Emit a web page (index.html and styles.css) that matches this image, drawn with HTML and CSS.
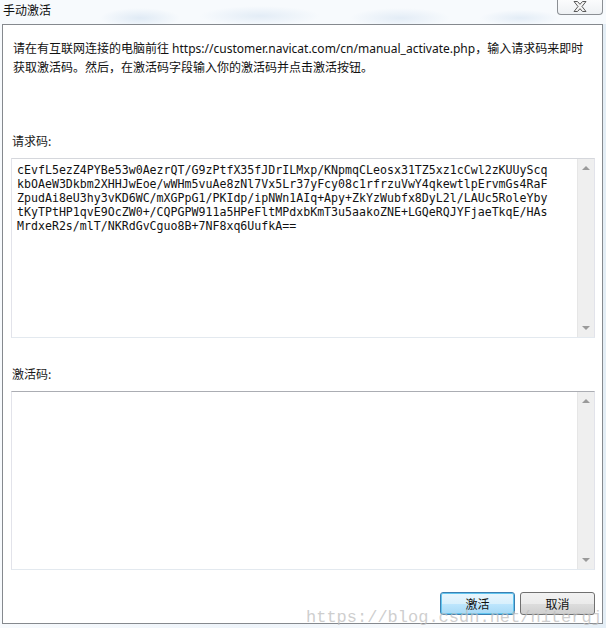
FILE: index.html
```html
<!DOCTYPE html>
<html lang="zh-CN">
<head>
<meta charset="utf-8">
<title>手动激活</title>
<link rel="stylesheet" href="styles.css">
</head>
<body>
<div class="window">
  <div class="titlebar">
    <span class="title">手动激活</span>
    <button class="close" aria-label="关闭">
      <svg width="14" height="11" viewBox="0 0 14 11">
        <polygon points="1,0.5 4.5,0.5 7,3.3 9.5,0.5 13,0.5 9,5.5 13,10.5 9.5,10.5 7,7.7 4.5,10.5 1,10.5 5,5.5" fill="#f4f4f4" stroke="#5a5a5a" stroke-width="1" stroke-linejoin="round"/>
      </svg>
    </button>
  </div>
  <div class="panel">
    <p class="intro">请在有互联网连接的电脑前往 https://customer.navicat.com/cn/manual_activate.php，输入请求码来即时<br>获取激活码。然后，在激活码字段输入你的激活码并点击激活按钮。</p>
    <div class="label">请求码:</div>
    <div class="textbox">
      <div class="tb-text">cEvfL5ezZ4PYBe53w0AezrQT/G9zPtfX35fJDrILMxp/KNpmqCLeosx31TZ5xz1cCwl2zKUUyScq
kbOAeW3Dkbm2XHHJwEoe/wWHm5vuAe8zNl7Vx5Lr37yFcy08c1rfrzuVwY4qkewtlpErvmGs4RaF
ZpudAi8eU3hy3vKD6WC/mXGPpG1/PKIdp/ipNWn1AIq+Apy+ZkYzWubfx8DyL2l/LAUc5RoleYby
tKyTPtHP1qvE9OcZW0+/CQPGPW911a5HPeFltMPdxbKmT3u5aakoZNE+LGQeRQJYFjaeTkqE/HAs
MrdxeR2s/mlT/NKRdGvCguo8B+7NF8xq6UufkA==</div>
      <div class="scrollbar"><span class="arrow up"></span><span class="arrow down"></span></div>
    </div>
    <div class="label label2">激活码:</div>
    <div class="textbox tall">
      <div class="tb-text"></div>
      <div class="scrollbar"><span class="arrow up"></span><span class="arrow down"></span></div>
    </div>
    <div class="actions">
      <button class="btn default">激活</button>
      <button class="btn">取消</button>
    </div>
    <div class="watermark">https://blog.csdn.net/nitergj</div>
  </div>
</div>
</body>
</html>
```

FILE: styles.css
```css
* { box-sizing: border-box; }
html, body { margin: 0; padding: 0; }
body {
  width: 606px;
  height: 628px;
  overflow: hidden;
  background: #f4f8fb;
  font-family: "Noto Sans", "Noto Sans CJK SC", sans-serif;
  font-size: 12px;
  color: #1a1a1a;
}
.window {
  width: 606px;
  height: 628px;
  display: flex;
  flex-direction: column;
  background: linear-gradient(90deg, #f7fafd 0%, #eef4fa 40%, #f6f9fc 70%, #e4eef6 100%);
}
.titlebar {
  height: 24px;
  display: flex;
  align-items: flex-start;
  background:
    radial-gradient(ellipse 40px 10px at 140px 18px, rgba(180,205,230,0.35), transparent),
    radial-gradient(ellipse 60px 10px at 260px 16px, rgba(180,205,230,0.3), transparent),
    radial-gradient(ellipse 50px 10px at 400px 18px, rgba(180,205,230,0.3), transparent),
    radial-gradient(ellipse 40px 8px at 520px 18px, rgba(180,205,230,0.3), transparent),
    #f7fafd;
}
.title {
  font-family: "Noto Sans CJK SC", sans-serif;
  font-size: 12px;
  line-height: 16px;
  padding: 2px 0 0 3px;
  color: #111;
}
.close {
  margin-left: auto;
  margin-right: 3px;
  width: 46px;
  height: 15px;
  padding: 0;
  border: 1px solid #8b8f94;
  border-top: none;
  border-radius: 0 0 4px 4px;
  background: linear-gradient(#fbfcfd, #eef1f4);
  display: flex;
  align-items: center;
  justify-content: center;
}
.close svg { display: block; margin-top: -1px; }
.panel {
  position: relative;
  margin-left: 2px;
  width: 601px;
  height: 600px;
  border: 1px solid #85898e;
  background: #ffffff;
  padding: 0 7px 0 8px;
  display: flex;
  flex-direction: column;
}
.intro {
  margin: 14px 0 0 2px;
  line-height: 19px;
  font-size: 12px;
  color: #111;
}
.label {
  margin: 54px 0 0 1px;
  line-height: 19px;
  font-family: "Noto Sans CJK SC", sans-serif;
  font-size: 12px;
}
.label2 { margin-top: 26px; }
.textbox {
  margin-top: 8px;
  width: 584px;
  height: 180px;
  border: 1px solid #e2e3ea;
  border-top-color: #d5d7dc;
  border-bottom-color: #e3e9ef;
  display: flex;
  background: #fff;
}
.textbox.tall {
  height: 179px;
  border-top-color: #abadb3;
}
.tb-text {
  flex: 1;
  padding: 4px 0 0 5px;
  font-family: "DejaVu Sans Mono", monospace;
  font-size: 11.6px;
  line-height: 14px;
  white-space: pre;
  color: #111;
  overflow: hidden;
}
.scrollbar {
  width: 17px;
  background: #efefef;
  border-left: 1px solid #e6e6e6;
  display: flex;
  flex-direction: column;
  justify-content: space-between;
  align-items: center;
  padding: 7px 0 7px;
}
.arrow {
  width: 0;
  height: 0;
  border-left: 4px solid transparent;
  border-right: 4px solid transparent;
}
.arrow.up { border-bottom: 4px solid #9a9a9a; }
.arrow.down { border-top: 4px solid #9a9a9a; }
.actions {
  margin-top: 22px;
  width: 584px;
  display: flex;
  justify-content: flex-end;
  gap: 5px;
}
.btn {
  width: 75px;
  height: 23px;
  padding: 0;
  border: 1px solid #707070;
  border-radius: 3px;
  background: linear-gradient(#f2f2f2 0%, #ebebeb 50%, #dddddd 51%, #cfcfcf 100%);
  font-family: "Noto Sans CJK SC", sans-serif;
  font-size: 12px;
  color: #111;
}
.btn.default {
  border-color: #3c7fb1;
  background: linear-gradient(#eaf6fd 0%, #d9f0fc 50%, #bee6fd 51%, #a7d9f5 100%);
  box-shadow: inset 0 0 0 1px #62c5ef;
}
.watermark {
  position: absolute;
  left: 303px;
  top: 583px;
  font-family: "Liberation Mono", monospace;
  font-size: 17px;
  line-height: 20px;
  color: rgba(190, 190, 190, 0.75);
  white-space: nowrap;
  pointer-events: none;
}
```
